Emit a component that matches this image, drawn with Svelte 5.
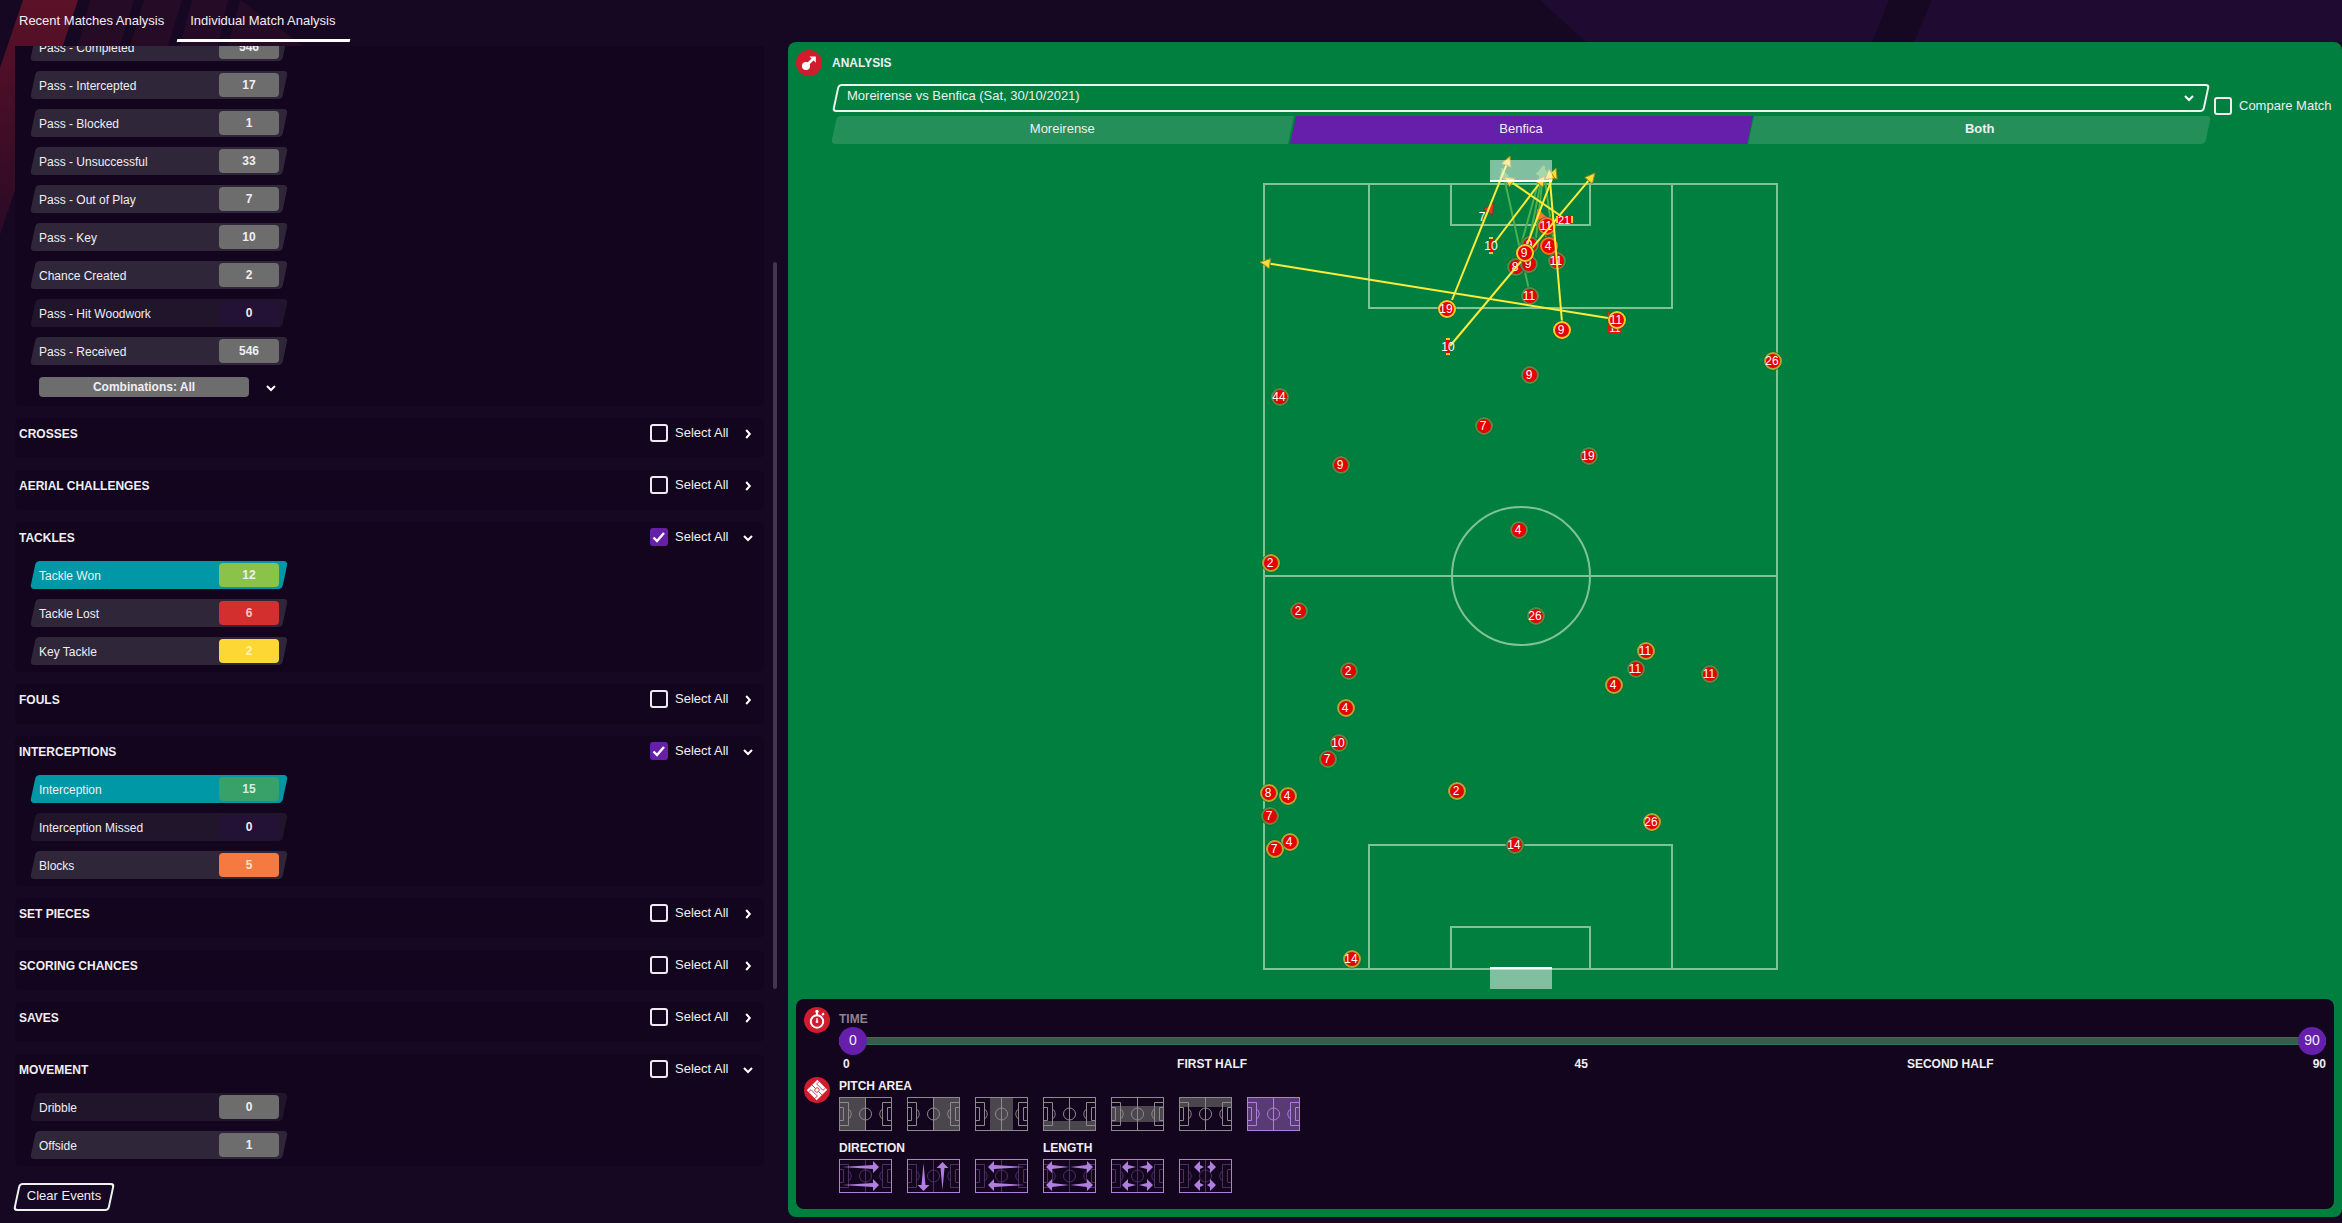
<script lang="ts">
  let low = $state(0)
  let high = $state(90)
  let team = $state('Benfica')
  let area = $state(6)

  const teams = ['Moreirense', 'Benfica', 'Both']

  const passes = [
    { label: 'Pass - Completed', value: 546 },
    { label: 'Pass - Intercepted', value: 17 },
    { label: 'Pass - Blocked', value: 1 },
    { label: 'Pass - Unsuccessful', value: 33 },
    { label: 'Pass - Out of Play', value: 7 },
    { label: 'Pass - Key', value: 10 },
    { label: 'Chance Created', value: 2 },
    { label: 'Pass - Hit Woodwork', value: 0, faded: true, tone: 'empty' },
    { label: 'Pass - Received', value: 546 }
  ]

  let sections = $state([
    { title: 'CROSSES', checked: false, open: false, rows: [] },
    { title: 'AERIAL CHALLENGES', checked: false, open: false, rows: [] },
    {
      title: 'TACKLES',
      checked: true,
      open: true,
      rows: [
        { label: 'Tackle Won', value: 12, active: true, tone: 'lime' },
        { label: 'Tackle Lost', value: 6, tone: 'red' },
        { label: 'Key Tackle', value: 2, tone: 'yellow' }
      ]
    },
    { title: 'FOULS', checked: false, open: false, rows: [] },
    {
      title: 'INTERCEPTIONS',
      checked: true,
      open: true,
      rows: [
        { label: 'Interception', value: 15, active: true, tone: 'green' },
        { label: 'Interception Missed', value: 0, faded: true, tone: 'empty' },
        { label: 'Blocks', value: 5, tone: 'orange' }
      ]
    },
    { title: 'SET PIECES', checked: false, open: false, rows: [] },
    { title: 'SCORING CHANCES', checked: false, open: false, rows: [] },
    { title: 'SAVES', checked: false, open: false, rows: [] },
    {
      title: 'MOVEMENT',
      checked: false,
      open: true,
      rows: [
        { label: 'Dribble', value: 0, faded: true },
        { label: 'Offside', value: 1 }
      ]
    }
  ])

  // Events on the pitch: x, y, shirt number, ring colour
  const ring = { g: '#4f8f4a', o: '#a9ac35', y: '#fdc92e', a: '#f4771f' }
  const under = [
    [317, 117, 11, 'g'], [290, 101, 9, 'g'], [276, 123, 8, 'g'], [289, 120, 9, 'g'],
    [290, 152, 11, 'g'], [307, 82, 11, 'a'], [309, 102, 4, 'a']
  ]
  const markers = [
    [285, 109, 9, 'y'], [207, 165, 19, 'y'], [322, 186, 9, 'y'], [377, 176, 11, 'y'],
    [533, 217, 26, 'o'], [290, 231, 9, 'g'], [40, 253, 44, 'g'], [244, 282, 7, 'g'],
    [349, 312, 19, 'g'], [101, 321, 9, 'g'], [279, 386, 4, 'g'], [31, 419, 2, 'o'],
    [59, 467, 2, 'g'], [296, 472, 26, 'g'], [406, 507, 11, 'o'], [396, 525, 11, 'g'],
    [470, 530, 11, 'g'], [374, 541, 4, 'o'], [109, 527, 2, 'g'], [106, 564, 4, 'o'],
    [99, 599, 10, 'g'], [88, 615, 7, 'g'], [29, 649, 8, 'o'], [48, 652, 4, 'o'],
    [30, 672, 7, 'g'], [50, 698, 4, 'o'], [35, 705, 7, 'o'], [217, 647, 2, 'o'],
    [412, 678, 26, 'o'], [275, 701, 14, 'g'], [112, 815, 14, 'o']
  ]

  // Shots: start x, y and tip x, y
  const onTarget = [
    [289, 146, 262, 24], [281, 101, 303, 22], [290, 93, 304, 22], [296, 94, 304, 22], [315, 108, 303, 22]
  ]
  const offTarget = [
    [212, 156, 270, 12], [255, 98, 305, 32], [321, 72, 264, 33], [210, 202, 355, 29],
    [287, 101, 316, 24], [322, 178, 309, 25], [368, 174, 20, 118]
  ]

  // Triangle head whose tip sits at the end of the line
  function head(x1, y1, x2, y2, size = 10) {
    const a = Math.atan2(y2 - y1, x2 - x1)
    const bx = x2 - Math.cos(a) * size
    const by = y2 - Math.sin(a) * size
    const dx = Math.sin(a) * size * 0.5
    const dy = Math.cos(a) * size * 0.5
    return `${x2},${y2} ${bx + dx},${by - dy} ${bx - dx},${by + dy}`
  }

  // Tapered arrow used in the direction and length filters
  function taper(x1, y1, x2, y2) {
    const a = Math.atan2(y2 - y1, x2 - x1)
    const ux = Math.cos(a)
    const uy = Math.sin(a)
    const at = (back, side) => `${x2 - ux * back - uy * side},${y2 - uy * back + ux * side}`
    return `${x1},${y1} ${at(6, 2)} ${at(6, 6)} ${x2},${y2} ${at(6, -6)} ${at(6, -2)}`
  }

  const areas = [
    { name: 'Own half', box: [0, 0, 26.5, 34] },
    { name: 'Opposition half', box: [26.5, 0, 26.5, 34] },
    { name: 'Midfield', box: [15, 0, 23, 34] },
    { name: 'Right side', box: [0, 24, 53, 10] },
    { name: 'Centre', box: [0, 9, 53, 16] },
    { name: 'Left side', box: [0, 0, 53, 10] },
    { name: 'All areas', box: [0, 0, 53, 34] }
  ]
  const directions = [
    { name: 'Forwards', arrows: [[3, 8, 40, 8], [3, 26, 40, 26]] },
    { name: 'Sideways', arrows: [[16.5, 4, 16.5, 32], [35.5, 31, 35.5, 3]] },
    { name: 'Backwards', arrows: [[50, 8, 13, 8], [50, 26, 13, 26]] }
  ]
  const lengths = [
    { name: 'Long', arrows: [[26, 8, 3, 8], [27, 8, 50, 8], [26, 26, 3, 26], [27, 26, 50, 26]] },
    { name: 'Medium', arrows: [[25, 8, 11, 8], [28, 8, 42, 8], [25, 26, 11, 26], [28, 26, 42, 26]] },
    { name: 'Short', arrows: [[25, 8, 15, 8], [28, 8, 37, 8], [25, 26, 15, 26], [28, 26, 37, 26]] }
  ]
</script>

{#snippet chevron(down)}
  <svg class="chevron" width="10" height="10" viewBox="0 0 10 10" aria-hidden="true">
    <path d={down ? 'M1 3l4 4 4-4' : 'M3.2 1l3.6 4-3.6 4'} />
  </svg>
{/snippet}

{#snippet stat(row)}
  <button class="stat" class:faded={row.faded} class:active={row.active}>
    <span class="stat-label">{row.label}</span>
    <span class="badge {row.tone ?? ''}">{row.value}</span>
  </button>
{/snippet}

{#snippet lines()}
  <path d="M26.5 0v34M0 5.5h9.5v23H0M0 10.5h4.5v13H0M53 5.5h-9.5v23H53M53 10.5h-4.5v13H53" />
  <path d="M9.5 12a6 6 0 0 1 0 10M43.5 12a6 6 0 0 0 0 10" />
  <circle cx="26.5" cy="17" r="6" />
{/snippet}

{#snippet arrowTile(item)}
  <button class="tile purple" aria-label={item.name}>
    <svg width="53" height="34" viewBox="0 0 53 34">
      <g class="dim">{@render lines()}</g>
      <rect x="0.5" y="0.5" width="52" height="33" />
      {#each item.arrows as [x1, y1, x2, y2]}
        <polygon points={taper(x1, y1, x2, y2)} />
      {/each}
    </svg>
  </button>
{/snippet}

{#snippet marker([x, y, n, r])}
  <g class="marker">
    <circle class="shade" cx={x} cy={y} r="9.5" />
    <circle cx={x} cy={y} r="8" stroke={ring[r]} />
    <text x={x - 1} y={y + 4}>{n}</text>
  </g>
{/snippet}

<div class="page">
  <svg class="backdrop" aria-hidden="true">
    <defs>
      <linearGradient id="red" x1="0" y1="0" x2="0" y2="1">
        <stop offset="0" stop-color="#5c1128" />
        <stop offset="1" stop-color="#2a0a25" />
      </linearGradient>
    </defs>
    <path fill="url(#red)" d="M23 0h55L0 235V68z" />
    <path fill="#260b26" d="M90 0h44l-14 46H78zM144 0h38l-14 46h-38zM192 0h36l-10 46h-38zM240 0l64 46h-76z" />
    <path fill="#1f0b31" d="M1540 0h349l-17 42h-286zM1932 0h410v42h-428z" />
  </svg>

  <nav class="tabs">
    <a href="#recent">Recent Matches Analysis</a>
    <a href="#individual" class="current" aria-current="page">Individual Match Analysis</a>
  </nav>

  <div class="columns">
    <aside>
      <div class="scroller">
        <div class="list">
          <section class="card passes">
            <div class="rows">
              {#each passes as row}
                {@render stat(row)}
              {/each}
            </div>
            <div class="combos">
              <button class="combo">Combinations: All</button>
              <button class="toggle" aria-label="Open combinations">{@render chevron(true)}</button>
            </div>
          </section>

          {#each sections as section}
            <section class="card">
              <header>
                <h2>{section.title}</h2>
                <label class="check">
                  <input type="checkbox" bind:checked={section.checked} />
                  Select All
                </label>
                <button
                  class="toggle"
                  aria-label="Toggle {section.title}"
                  onclick={() => (section.open = !section.open)}
                >
                  {@render chevron(section.open)}
                </button>
              </header>
              {#if section.open}
                <div class="rows">
                  {#each section.rows as row}
                    {@render stat(row)}
                  {/each}
                </div>
              {/if}
            </section>
          {/each}
        </div>
        <div class="scrollbar"><div class="thumb"></div></div>
      </div>
      <button class="clear">Clear Events</button>
    </aside>

    <main>
      <div class="title">
        <svg width="26" height="26" viewBox="0 0 26 26" aria-hidden="true">
          <circle cx="13" cy="13" r="13" fill="#d01c2c" />
          <circle cx="10" cy="16" r="4" fill="#fff" />
          <path d="M11 15l6-6" stroke="#fff" stroke-width="2.6" />
          <path d="M13.5 6.5h6.3v6.3z" fill="#fff" />
        </svg>
        <h1>ANALYSIS</h1>
      </div>

      <div class="analysis">
        <div class="match">
          <select aria-label="Match">
            <option>Moreirense vs Benfica (Sat, 30/10/2021)</option>
          </select>
          {@render chevron(true)}
        </div>
        <label class="check compare">
          <input type="checkbox" />
          Compare Match
        </label>
        <div class="teams">
          {#each teams as name}
            <button class:selected={team === name} class:both={name === 'Both'} onclick={() => (team = name)}>
              <span>{name}</span>
            </button>
          {/each}
        </div>

        <svg class="pitch" viewBox="0 0 562 855" role="img" aria-label="Pitch events">
          <g class="lines">
            <rect x="24" y="40" width="513" height="785" />
            <path d="M24 432h513M129 40v124h303V40M211 40v41h139V40M129 825V701h303v124M211 825v-42h139v42" />
            <circle cx="281" cy="432" r="69" />
          </g>

          {#each onTarget as [x1, y1, x2, y2]}
            <line class="on" {x1} {y1} {x2} {y2} />
            <polygon class="on-head" points={head(x1, y1, x2, y2)} />
          {/each}
          <polygon class="miss" points={head(242, 77, 254, 59, 11)} />
          <text class="loose" x="242" y="77">7</text>
          <g class="saved">
            <path d="M308 99L299 72M306 78l-6-8" />
            <polygon points={head(308, 99, 298, 65)} />
            <polygon points={head(316, 90, 300, 70)} />
          </g>
          {#each under as m}
            {@render marker(m)}
          {/each}
          <polygon class="miss" points="367,166 372,172 368,184" />
          <rect x="367" y="177" width="15" height="12" rx="3" fill="#e8121a" />
          <text class="small" x="375" y="188">11</text>

          {#each offTarget as [x1, y1, x2, y2]}
            <line class="off" {x1} {y1} x2={x2 - (x2 - x1) * 0.03} y2={y2 - (y2 - y1) * 0.03} />
            <polygon class="off-head" points={head(x1, y1, x2, y2)} />
          {/each}

          <rect x="316" y="72" width="17" height="7" fill="#fdc92e" />
          <rect x="318" y="72" width="13" height="7" fill="#e60000" />
          <text class="small" x="324" y="80">21</text>
          <g>
            <rect x="249" y="93" width="4" height="17" fill="#fdc92e" />
            <rect x="249" y="95" width="4" height="13" fill="#e60000" />
            <text class="loose" x="251" y="106">10</text>
            <rect x="206" y="194" width="4" height="17" fill="#fdc92e" />
            <rect x="206" y="196" width="4" height="13" fill="#e60000" />
            <text class="loose" x="208" y="207">10</text>
          </g>
          {#each markers as m}
            {@render marker(m)}
          {/each}

          <g fill="#fff">
            <rect x="250" y="16" width="62" height="22" opacity="0.5" />
            <rect x="250" y="36" width="62" height="2" />
            <rect x="250" y="823" width="62" height="22" opacity="0.5" />
            <rect x="250" y="823" width="62" height="2" />
          </g>
        </svg>
      </div>

      <div class="filters">
        <svg width="26" height="26" viewBox="0 0 26 26" aria-hidden="true">
          <circle cx="13" cy="13" r="13" fill="#d01c2c" />
          <circle cx="13" cy="14.5" r="6.2" fill="none" stroke="#fff" stroke-width="2" />
          <circle cx="13" cy="4.5" r="1.7" fill="#fff" />
          <path d="M13 5v3M18 8l2-1.6" stroke="#fff" stroke-width="2" />
          <path d="M13 11l1 4.5h-2z" fill="#fff" stroke="#fff" stroke-width="0.6" />
        </svg>
        <div class="time">
          <h3 class="muted">TIME</h3>
          <div class="slider">
            <div class="track"></div>
            <input type="range" min="0" max="90" bind:value={low} aria-label="From minute" />
            <input type="range" min="0" max="90" bind:value={high} aria-label="To minute" />
            <output style="left: calc((100% - 28px) * {low / 90})">{low}</output>
            <output style="left: calc((100% - 28px) * {high / 90})">{high}</output>
          </div>
          <div class="scale">
            <span>0</span>
            <span class="half">FIRST HALF</span>
            <span>45</span>
            <span class="half">SECOND HALF</span>
            <span>90</span>
          </div>
        </div>

        <svg width="26" height="26" viewBox="0 0 26 26" aria-hidden="true">
          <circle cx="13" cy="13" r="13" fill="#d01c2c" />
          <g transform="rotate(-45 13 13)">
            <rect x="5.5" y="6" width="15" height="14" fill="#fff" />
            <g fill="none" stroke="#d01c2c" stroke-width="0.8">
              <circle cx="13" cy="13" r="2.2" />
              <path d="M13 6v4.800M13 15.200V20M5.500 8.500h3.500v9H5.500M20.500 8.500H17v9h3.500" />
            </g>
          </g>
        </svg>
        <div class="areas">
          <h3>PITCH AREA</h3>
          <div class="tiles">
            {#each areas as item, i}
              <button class="tile" class:purple={area === i} aria-label={item.name} onclick={() => (area = i)}>
                <svg width="53" height="34" viewBox="0 0 53 34">
                  <rect
                    class="zone"
                    x={item.box[0]}
                    y={item.box[1]}
                    width={item.box[2]}
                    height={item.box[3]}
                  />
                  {@render lines()}
                  <rect x="0.5" y="0.5" width="52" height="33" />
                </svg>
              </button>
            {/each}
          </div>
          <div class="groups">
            <div>
              <h3>DIRECTION</h3>
              <div class="tiles">
                {#each directions as item}
                  {@render arrowTile(item)}
                {/each}
              </div>
            </div>
            <div>
              <h3>LENGTH</h3>
              <div class="tiles">
                {#each lengths as item}
                  {@render arrowTile(item)}
                {/each}
              </div>
            </div>
          </div>
        </div>
      </div>
    </main>
  </div>
</div>

<style>
  :global(body) {
    margin: 0;
    background: #160822;
  }
  .page {
    position: relative;
    display: flex;
    flex-direction: column;
    height: 100vh;
    color: #f1eef3;
    font-family: 'Liberation Sans', Arial, sans-serif;
    font-size: 13px;
    line-height: 18px;
  }
  .page * {
    box-sizing: border-box;
  }
  .backdrop {
    position: absolute;
    inset: 0;
    width: 100%;
    height: 100%;
  }
  button {
    position: relative;
    padding: 0;
    border: 0;
    background: none;
    color: inherit;
    font: inherit;
    cursor: pointer;
  }
  h1,
  h2,
  h3 {
    margin: 0;
    font-size: 12px;
    line-height: 18px;
    font-weight: 700;
  }

  .tabs {
    position: relative;
    display: flex;
    height: 42px;
    flex: none;
    padding-left: 6px;
  }
  .tabs a {
    position: relative;
    padding: 12px 13px 0;
    color: inherit;
    text-decoration: none;
  }
  .tabs .current::after {
    content: '';
    position: absolute;
    left: 0;
    right: -2px;
    bottom: 0;
    height: 3px;
    background: #fff;
    transform: skewX(-12deg);
  }

  .columns {
    position: relative;
    display: grid;
    grid-template-columns: minmax(0, 788fr) minmax(0, 1554fr);
    flex: 1;
    min-height: 0;
  }
  aside {
    display: flex;
    flex-direction: column;
    align-items: flex-start;
    gap: 17px;
    min-height: 0;
    padding: 4px 11px 12px 15px;
  }
  .scroller {
    display: flex;
    gap: 9px;
    width: 100%;
    flex: 1;
    min-height: 0;
  }
  .list {
    display: flex;
    flex-direction: column;
    justify-content: flex-end;
    gap: 12px;
    flex: 1;
    overflow: hidden;
  }
  .scrollbar {
    display: flex;
    flex-direction: column;
    width: 4px;
    padding: 216px 0 177px;
  }
  .thumb {
    flex: 1;
    border-radius: 2px;
    background: #43344f;
  }
  .card {
    flex: none;
    min-height: 40px;
    padding: 0 8px 7px 4px;
    border-radius: 6px;
    background: #13051d;
  }
  .card header {
    display: flex;
    align-items: center;
    height: 30px;
  }
  .card h2 {
    flex: 1;
    padding-top: 2px;
  }
  .toggle {
    display: flex;
    justify-content: center;
    width: 30px;
    padding-top: 2px;
  }
  .card header .check {
    width: 83px;
  }
  .card header .toggle {
    margin-right: -7px;
  }
  .chevron {
    fill: none;
    stroke: #fff;
    stroke-width: 2;
  }
  .rows {
    display: flex;
    flex-direction: column;
    gap: 10px;
    margin-top: 9px;
    padding-left: 14px;
  }
  .passes {
    padding-bottom: 9px;
  }

  .stat {
    display: flex;
    align-items: center;
    justify-content: space-between;
    width: 252px;
    height: 28px;
    padding: 0 6px;
    font-size: 12px;
    text-align: left;
  }
  .stat::before {
    content: '';
    position: absolute;
    inset: 0;
    border-radius: 4px;
    background: #302639;
    transform: skewX(-12deg);
  }
  .stat.faded::before {
    background: #20152a;
  }
  .stat.active::before {
    background: #0097a7;
  }
  .stat-label {
    position: relative;
    padding-top: 2px;
  }
  .badge {
    position: relative;
    width: 60px;
    border-radius: 4px;
    background: #6d6d6d;
    font-weight: 700;
    line-height: 24px;
    text-align: center;
  }
  .badge.empty {
    background: #241236;
  }
  .badge.lime {
    background: #8bc34a;
  }
  .badge.red {
    background: #d32f2f;
    color: #f5c9cc;
  }
  .badge.yellow {
    background: #fdd835;
    color: #fff2b8;
  }
  .badge.green {
    background: #38a169;
    color: #d8eedd;
  }
  .badge.orange {
    background: #f47a42;
    color: #ffe0cf;
  }
  .combos {
    display: flex;
    align-items: center;
    gap: 7px;
    margin-top: 12px;
    padding-left: 20px;
  }
  .combo {
    width: 210px;
    height: 20px;
    border-radius: 4px;
    background: #6d6d6d;
    font-size: 12px;
    font-weight: 700;
  }

  .check {
    display: flex;
    align-items: center;
    gap: 7px;
    white-space: nowrap;
  }
  .check input {
    appearance: none;
    flex: none;
    width: 18px;
    height: 18px;
    margin: 0;
    border: 2px solid #efeaf2;
    border-radius: 3px;
  }
  .check input:checked {
    border: 0;
    background:
      url("data:image/svg+xml,%3Csvg xmlns='http://www.w3.org/2000/svg' viewBox='0 0 18 18'%3E%3Cpath d='M3.5 9.5l3.5 3.5 7-8' fill='none' stroke='white' stroke-width='2.4'/%3E%3C/svg%3E"),
      #671fa8;
  }

  .clear {
    width: 96px;
    height: 28px;
    margin-left: 1px;
    padding-bottom: 3px;
    font-size: 13px;
  }
  .clear::before,
  .match::before {
    content: '';
    position: absolute;
    inset: 0;
    border: 2px solid #eef3ef;
    border-radius: 4px;
    transform: skewX(-12deg);
    pointer-events: none;
  }

  main {
    display: flex;
    flex-direction: column;
    min-height: 0;
    margin-bottom: 6px;
    padding: 8px;
    border-radius: 8px;
    background: #007f3f;
  }
  .title {
    display: flex;
    align-items: center;
    gap: 10px;
    height: 26px;
  }
  .analysis {
    display: grid;
    grid-template-columns: minmax(0, 1fr) 120px;
    grid-template-rows: 32px 28px minmax(0, 1fr);
    column-gap: 4px;
    flex: 1;
    min-height: 0;
    margin-top: 8px;
    padding-left: 36px;
  }
  .match {
    position: relative;
    display: flex;
    align-items: center;
    height: 28px;
    margin: 0 3px;
    padding-right: 13px;
  }
  .match select {
    flex: 1;
    height: 28px;
    padding: 0 12px 4px;
    border: 0;
    appearance: none;
    background: none;
    color: inherit;
    font: inherit;
  }
  .compare {
    align-self: start;
    padding-top: 13px;
  }
  .teams {
    grid-column: 1;
    display: flex;
    gap: 2px;
    margin: 0 2px;
  }
  .teams button {
    flex: 1;
    padding-bottom: 3px;
  }
  .teams button::before {
    content: '';
    position: absolute;
    inset: 0;
    background: #248f59;
    transform: skewX(-12deg);
  }
  .teams button:first-child::before {
    border-radius: 4px 0 0 4px;
  }
  .teams button:last-child::before {
    border-radius: 0 4px 4px 0;
  }
  .teams .selected::before {
    background: #651faa;
  }
  .teams span {
    position: relative;
  }
  .teams .both {
    font-weight: 700;
  }

  .pitch {
    grid-column: 1;
    width: 100%;
    height: 100%;
  }
  .pitch .lines {
    fill: none;
    stroke: #7fc492;
    stroke-width: 2;
  }
  .pitch text {
    fill: #fff;
    font-size: 12px;
    text-anchor: middle;
  }
  .pitch .small {
    font-size: 11px;
  }
  .marker circle {
    fill: #e60000;
    stroke-width: 2;
  }
  .marker .shade {
    fill: #1d5a2c;
    opacity: 0.8;
  }
  .on {
    stroke: #4caf50;
    stroke-width: 2;
  }
  .on-head {
    fill: #4caf50;
  }
  .off {
    stroke: #ffeb3b;
    stroke-width: 2;
  }
  .off-head {
    fill: #fddb35;
    stroke: #8f8a26;
  }
  .miss {
    fill: #e53529;
    stroke: #7a3a20;
  }
  .saved {
    fill: #ee7d24;
    stroke: #ee7d24;
  }

  .filters {
    display: grid;
    grid-template-columns: 26px minmax(0, 1fr);
    column-gap: 9px;
    height: 210px;
    align-content: start;
    flex: none;
    padding: 8px 8px 8px 8px;
    border-radius: 8px;
    background: #13051d;
  }
  .time {
    height: 70px;
    padding-top: 3px;
  }
  .muted {
    height: 17px;
    color: #8a858e;
  }
  .slider {
    position: relative;
    display: grid;
    align-items: center;
    height: 28px;
  }
  .slider > * {
    grid-area: 1 / 1;
  }
  .track {
    height: 8px;
    border: 1px solid #2f7350;
    background: #365c4b;
  }
  .slider input {
    appearance: none;
    width: 100%;
    height: 28px;
    margin: 0;
    background: none;
    pointer-events: none;
  }
  .slider input::-webkit-slider-thumb {
    appearance: none;
    width: 28px;
    height: 28px;
    border-radius: 50%;
    background: #651faa;
    pointer-events: auto;
  }
  .slider output {
    position: absolute;
    top: 0;
    width: 28px;
    font-size: 14px;
    line-height: 27px;
    text-align: center;
    pointer-events: none;
  }
  .scale {
    display: flex;
    padding-left: 4px;
    font-size: 12px;
    font-weight: 700;
  }
  .half {
    flex: 1;
    text-align: center;
  }
  .areas h3 {
    height: 20px;
  }
  .tiles {
    display: flex;
    gap: 15px;
  }
  .tile {
    height: 34px;
  }
  .tile svg {
    display: block;
    fill: none;
    stroke: #8d8a8c;
  }
  .tile .zone {
    fill: #4b454e;
    stroke: none;
  }
  .tile.purple svg {
    stroke: #b07ede;
  }
  .tile.purple .zone {
    fill: #583b72;
  }
  .tile .dim {
    stroke: #4b2f63;
  }
  .tile polygon {
    fill: #b07ede;
    stroke: none;
  }
  .groups {
    display: flex;
    gap: 15px;
    margin-top: 8px;
  }
</style>
